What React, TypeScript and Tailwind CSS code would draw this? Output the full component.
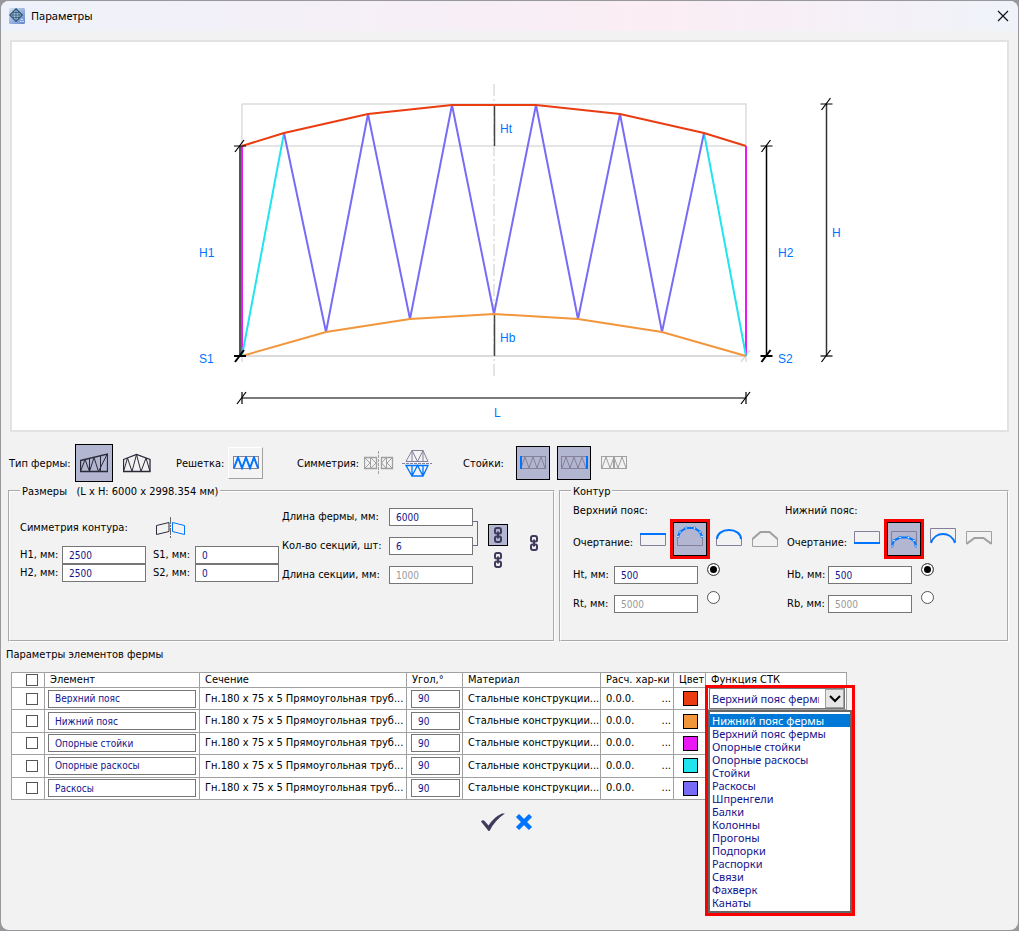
import { useId, useState, type ReactNode } from 'react';
import clsx from 'clsx';

const BLUE = '#0074ff';
const INK = '#2b2a3a';
const MUTED = '#85809a';
const GRAY = '#a0a0a0';

const elements = [
  { name: 'Верхний пояс', swatch: 'bg-[#ea3c10]' },
  { name: 'Нижний пояс', swatch: 'bg-[#f2963c]' },
  { name: 'Опорные стойки', swatch: 'bg-[#ea18f4]' },
  { name: 'Опорные раскосы', swatch: 'bg-[#20e4ee]' },
  { name: 'Раскосы', swatch: 'bg-[#786cf6]' },
];

const functions = [
  'Нижний пояс фермы',
  'Верхний пояс фермы',
  'Опорные стойки',
  'Опорные раскосы',
  'Стойки',
  'Раскосы',
  'Шпренгели',
  'Балки',
  'Колонны',
  'Прогоны',
  'Подпорки',
  'Распорки',
  'Связи',
  'Фахверк',
  'Канаты',
];

/* ---------- icons ---------- */

function Icon({ w, h, children }: { w: number; h: number; children: ReactNode }) {
  return (
    <svg width={w} height={h} viewBox={`0 0 ${w} ${h}`} fill="none" aria-hidden="true" className="block shrink-0">
      {children}
    </svg>
  );
}

function AppIcon() {
  return (
    <Icon w={16} h={16}>
      <defs>
        <linearGradient id="app-bg" x1="0" y1="0" x2="1" y2="1">
          <stop offset="0" stopColor="#d5e0f2" />
          <stop offset="1" stopColor="#5f86cc" />
        </linearGradient>
      </defs>
      <rect width="16" height="16" rx="1.5" fill="url(#app-bg)" />
      <path d="M7 .8 13.4 7 7 13.4.8 7Z" fill="#a9c0da" stroke="#2f5878" strokeWidth="1.2" />
      <path d="M7 1V13M1 7H13M4.5 3.5Q3 7 4.5 10.5M9.5 3.5Q11 7 9.5 10.5M3.5 4.500H10.500M3.5 9.500H10.500" stroke="#2f5878" strokeWidth=".8" />
      <path d="M11 13.5h1.5M13.5 13.5H15M12 11.5h2" stroke="#dfe9f7" />
    </Icon>
  );
}

function ChainIcon() {
  return (
    <Icon w={8} h={16}>
      <g stroke="#3f3b5c" strokeWidth="2">
        <path d="M3 6.500H2.500Q1 6.500 1 5V3Q1 1 3 1H5Q7 1 7 3V5Q7 6.500 5.500 6.500H5" />
        <path d="M3 9.500H2.500Q1 9.500 1 11V13Q1 15 3 15H5Q7 15 7 13V11Q7 9.500 5.500 9.500H5" />
        <path d="M4 4.500V11.500" />
      </g>
    </Icon>
  );
}

function SlopedTrussIcon() {
  return (
    <Icon w={28} h={20}>
      <g stroke={INK}>
        <path d="M.5 7.500 27.500 1V18.500H.5Z" strokeWidth="1.300" />
        <path d="M.5 18.500 5 6.500 9.500 18.500 14 4.500 18.500 18.500 27 1.500M9.500 5.500V18.500M20.500 3V18.500" />
      </g>
    </Icon>
  );
}

function GableTrussIcon() {
  return (
    <Icon w={28} h={20}>
      <g stroke={INK}>
        <path d="M.5 6.500 13.500 1.500 27 6.500V18.500H.5Z" strokeWidth="1.300" />
        <path d="M.5 18.500 4.500 5 9 18.500 13.500 1.500 18 18.500 23 5 27 18.500" />
      </g>
    </Icon>
  );
}

function LatticeIcon() {
  return (
    <Icon w={26} h={14}>
      <rect x=".5" y=".5" width="25" height="12" stroke={MUTED} />
      <path d="M1 12 5 1.500 9 12 13 1.500 17 12 21 1.500 25 12" stroke={BLUE} strokeWidth="2" />
    </Icon>
  );
}

function MirrorVerticalIcon() {
  return (
    <Icon w={30} h={24}>
      <g stroke={GRAY}>
        <path d="M.5 6.500H12.500V17.500H.5ZM17.500 6.500H28.500V17.500H17.500Z" strokeWidth="1.300" />
        <path d="M1 7 6 12 1 17M6.500 7V17M7 7 12 12 7 17M28 7 23 12 28 17M22.500 7V17M22 7 17.500 12 22 17" />
        <path d="M14.500 0V24" strokeDasharray="3 1" />
      </g>
    </Icon>
  );
}

function MirrorHorizontalIcon() {
  return (
    <Icon w={30} h={28}>
      <path d="M4 12.500 10 1.500H21L26 12.500ZM10 12.500V1.500L15.500 12.500 21 1.500V12.500" stroke={MUTED} />
      <path d="M0 14.500H30" stroke={MUTED} strokeDasharray="3 1" />
      <path d="M4 16.500H26L21 27H10ZM10 16.500V27L15.500 16.500 21 27V16.500" stroke={BLUE} strokeWidth="1.300" />
    </Icon>
  );
}

function PostIcon({ side }: { side: 'left' | 'right' | 'center' }) {
  const c = side === 'center' ? GRAY : MUTED;
  return (
    <Icon w={27} h={14}>
      <rect x=".5" y=".5" width="25" height="12" stroke={c} />
      <path d="M1 12 5 1 9 12 13 1 17 12 21 1 25 12" stroke={c} />
      {side === 'left' && <path d="M1 0V13" stroke={BLUE} strokeWidth="2" />}
      {side === 'right' && <path d="M26 0V13" stroke={BLUE} strokeWidth="2" />}
      {side === 'center' && <path d="M13 0V13" stroke={c} strokeWidth="2" />}
    </Icon>
  );
}

function ContourSymmetryIcon() {
  return (
    <Icon w={31} h={22}>
      <path d="M1.500 8.500 14 5.500V14.500L1.500 17.500Z" stroke={INK} />
      <path d="M15.500 0V21" stroke={INK} strokeOpacity=".7" strokeDasharray="7 1 2 1" />
      <path d="M17.500 5.500 29.500 8.500V17.500L17.500 14.500Z" stroke={BLUE} />
    </Icon>
  );
}

const topShapes: ReactNode[] = [
  <g key="flat">
    <path d="M.5 8V19.500H25.500V8" stroke={MUTED} />
    <path d="M0 8H26" stroke={BLUE} strokeWidth="2" />
  </g>,
  <g key="poly">
    <path d="M.5 11V19.500H25.500V11" stroke={MUTED} />
    <path d="M1 10.500 3 6 9 2H17.500L23 6 25 10.500" stroke={BLUE} strokeWidth="2" />
    {[[1, 10.5], [3, 6], [9, 2], [17.5, 2], [23, 6], [25, 10.5]].map(([x, y]) => (
      <circle key={x} cx={x} cy={y} r="1.200" fill="#fff" stroke={BLUE} strokeWidth=".8" />
    ))}
  </g>,
  <g key="arc">
    <path d="M.5 12V19.500H25.500V12" stroke={MUTED} />
    <path d="M1 13C1 8 6 4 13 4S25 8 25 13" stroke={BLUE} strokeWidth="2" />
  </g>,
  <g key="trapeze" stroke={GRAY}>
    <path d="M.5 13V20.500H25.500V13" />
    <path d="M.5 13 8.500 6H17.500L25.500 13" strokeWidth="2" />
  </g>,
];

const bottomShapes: ReactNode[] = [
  <g key="flat">
    <path d="M.5 17V5.500H25.500V17" stroke={MUTED} />
    <path d="M0 17H26" stroke={BLUE} strokeWidth="2" />
  </g>,
  <g key="poly">
    <path d="M.5 19V5.500H25.500V19" stroke={MUTED} />
    <path d="M1 20 3 14.500 9 11.500H17.500L23 14.500 25 20" stroke={BLUE} strokeWidth="2" />
    {[[1, 20], [3, 14.5], [9, 11.5], [17.5, 11.5], [23, 14.5], [25, 20]].map(([x, y]) => (
      <circle key={x} cx={x} cy={y} r="1.200" fill="#fff" stroke={BLUE} strokeWidth=".8" />
    ))}
  </g>,
  <g key="arc">
    <path d="M.5 16V2.500H25.500V16" stroke={MUTED} />
    <path d="M1 17C3 11 8 8 13 8S23 11 25 17" stroke={BLUE} strokeWidth="2" />
  </g>,
  <g key="trapeze" stroke={GRAY}>
    <path d="M.5 18V5.500H25.500V18" />
    <path d="M.5 18 8.500 12H17.500L25.500 18" strokeWidth="2" />
  </g>,
];

/* ---------- truss drawing ---------- */

function Tick({ x, y, bold = false, vertical = false }: { x: number; y: number; bold?: boolean; vertical?: boolean }) {
  return (
    <g stroke="#000" strokeWidth={bold ? 2 : 1.2}>
      {vertical ? <path d={`M${x} ${y - 6}v12`} /> : <path d={`M${x - 6} ${y}h12`} />}
      <path d={`M${x - 5} ${y + 6}l9 -12`} />
    </g>
  );
}

function TrussDrawing() {
  return (
    <svg viewBox="12 42 995 388" className="block w-full bg-white" fill="none" role="img" aria-label="Схема фермы">
      <g stroke="#dcdcdc" strokeWidth="1.500">
        <path d="M242 104H746V362M242 104V362" />
        <path d="M242 146H746" />
        <path d="M242 356H746" stroke="#cfcfcf" />
        <path d="M494 84V377" strokeDasharray="12 3 2 3" />
        <path d="M741 362 750 350" />
      </g>
      <path d="M494.500 104V146M494.500 314V356" stroke="#444" strokeWidth="1.500" />
      <path d="M240.500 146V356" stroke="#555" strokeWidth="3" />
      <g strokeWidth="2">
        <path d="M242 146V356M746 146V356" stroke="#ea18f4" />
        <path d="M242 356 284 133M704 133 746 356" stroke="#20e4ee" />
        <path
          d="M284 133 326 332 368 114 410 319 452 105 494 314 536 105 578 319 620 114 662 332 704 133"
          stroke="#786cf6"
        />
        <path d="M242 356 326 332 410 319 494 314 578 319 662 332 746 356" stroke="#f2963c" />
        <path d="M242 146 284 133 368 114 452 105H536L620 114 704 133 746 146" stroke="#ea3c10" />
      </g>
      <Tick x={240} y={146} />
      <Tick x={240} y={356} bold />

      <path d="M766.500 146V356" stroke="#000" strokeWidth="1.500" />
      <Tick x={766.5} y={146} />
      <Tick x={766.5} y={356} bold />

      <path d="M826.500 104V356" stroke="#333" strokeWidth="1.500" />
      <Tick x={826.5} y={104} />
      <Tick x={826.5} y={356} />

      <path d="M242 398H746" stroke="#7a7a7a" strokeWidth="2" />
      <Tick x={242} y={398} vertical />
      <Tick x={746} y={398} vertical />

      <g fill={BLUE} className="font-['Liberation_Sans'] text-xs">
        <text x="500" y="133">Ht</text>
        <text x="500" y="342">Hb</text>
        <text x="199" y="257">H1</text>
        <text x="199" y="363">S1</text>
        <text x="778" y="257">H2</text>
        <text x="778" y="363">S2</text>
        <text x="832" y="237">H</text>
        <text x="494" y="417">L</text>
      </g>
    </svg>
  );
}

/* ---------- controls ---------- */

const inputBase = "block h-[18px] border border-[#767676] bg-white px-[6px] font-['DejaVu_Sans_Condensed'] text-[10px] text-[#14148c] outline-none disabled:text-[#9a9a9a]";

function Field({ label, value, labelClass, disabled }: { label: string; value: string; labelClass: string; disabled?: boolean }) {
  const id = useId();
  return (
    <div className="flex items-center">
      <label htmlFor={id} className={clsx('shrink-0 whitespace-nowrap', labelClass)}>
        {label}
      </label>
      <input id={id} defaultValue={value} disabled={disabled} className={clsx(inputBase, 'w-[84px]')} />
    </div>
  );
}

function IconButton({ title, className, children }: { title: string; className?: string; children: ReactNode }) {
  return (
    <button type="button" aria-label={title} className={clsx('flex shrink-0 items-center justify-center', className)}>
      {children}
    </button>
  );
}

function Chord({ title, shapes, h, r, className }: { title: string; shapes: ReactNode[]; h: string; r: string; className?: string }) {
  const group = useId();
  return (
    <div>
      <h3 className="leading-4">{title}</h3>
      <div className={className}>
        <div className="flex h-10 items-center">
          <span className="w-[67px] shrink-0 pt-2">Очертание:</span>
          <IconButton title="Прямое" className="w-[26px]">
            <Icon w={26} h={26}>{shapes[0]}</Icon>
          </IconButton>
          <IconButton title="Ломаное" className="mr-[6px] ml-1 size-10 border-3 border-[#fc0000] bg-black p-px">
            <span className="flex size-full items-center justify-center bg-[#b2b6d0]">
              <Icon w={26} h={26}>{shapes[1]}</Icon>
            </span>
          </IconButton>
          <IconButton title="Дуга" className="w-[26px]">
            <Icon w={26} h={26}>{shapes[2]}</Icon>
          </IconButton>
          <IconButton title="Трапеция" className="ml-[10px] w-[26px]">
            <Icon w={26} h={26}>{shapes[3]}</Icon>
          </IconButton>
        </div>
        <div className="mt-1 flex gap-[9px]">
          <div className="flex flex-col gap-[11px] pt-[3px]">
            <Field label={`${h}, мм:`} value="500" labelClass="w-[41px]" />
            <Field label={`${r}, мм:`} value="5000" labelClass="w-[41px]" disabled />
          </div>
          <div className="flex flex-col gap-[15px]">
            {[h, r].map((v) => (
              <input
                key={v}
                type="radio"
                name={group}
                aria-label={v}
                defaultChecked={v === h}
                className="size-[13px] appearance-none rounded-full border border-[#555] bg-white checked:bg-black checked:shadow-[inset_0_0_0_2px_white]"
              />
            ))}
          </div>
        </div>
      </div>
    </div>
  );
}

function FunctionSelect() {
  const [active, setActive] = useState(0);
  return (
    <div className="absolute -top-[3px] -left-px z-10 w-[150px] border-3 border-[#fc0000] font-['Noto_Sans'] text-[11px] text-[#14148c]">
      <div className="relative ml-px w-[136px]">
        <select
          aria-label="Функция СТК"
          defaultValue="Верхний пояс фермы"
          className="block h-[21px] w-full appearance-none border border-[#767676] bg-white pr-[25px] pl-[2px]"
        >
          {functions.map((f) => (
            <option key={f}>{f}</option>
          ))}
        </select>
        <span className="pointer-events-none absolute top-px right-px flex h-[19px] w-[19px] items-center justify-center border border-[#a0a0a0] bg-[#e6e6e6]">
          <svg width="12" height="8" viewBox="0 0 12 8" fill="none" stroke="#000" strokeWidth="2">
            <path d="M1 1 6 6 11 1" />
          </svg>
        </span>
      </div>
      <ul role="listbox" aria-label="Список функций" className="mt-px border-2 border-[#666] bg-white py-[2px]">
        {functions.map((f, i) => (
          <li
            key={f}
            role="option"
            aria-selected={i === active}
            onMouseEnter={() => setActive(i)}
            className={clsx('h-[13px] pl-[2px] leading-[13px]', i === active && 'bg-[#0078d7] text-white')}
          >
            {f}
          </li>
        ))}
      </ul>
    </div>
  );
}

function TableCheckbox({ label }: { label: string }) {
  return (
    <div className="flex justify-center pl-2">
      <input
        type="checkbox"
        aria-label={label}
        className="block size-[12px] appearance-none border border-[#555] bg-white checked:bg-[#555]"
      />
    </div>
  );
}

function ElementsTable() {
  const cell = 'border border-[#a0a0a0] p-0 pl-[5px] text-left font-normal whitespace-nowrap overflow-hidden';
  return (
    <table aria-label="Параметры элементов фермы" className="h-[128px] w-[836px] table-fixed border-collapse bg-white leading-[14px]">
      <colgroup>
        <col className="w-[33px]" />
        <col className="w-[155px]" />
        <col className="w-[207px]" />
        <col className="w-[56px]" />
        <col className="w-[138px]" />
        <col className="w-[73px]" />
        <col className="w-[32px]" />
        <col />
      </colgroup>
      <thead>
        <tr className="h-[15px]">
          <th className="border border-[#a0a0a0] p-0">
            <TableCheckbox label="Выбрать все" />
          </th>
          {['Элемент', 'Сечение', 'Угол,°', 'Материал', 'Расч. хар-ки', 'Цвет', 'Функция СТК'].map((h) => (
            <th key={h} className={cell}>
              {h}
            </th>
          ))}
        </tr>
      </thead>
      <tbody>
        {elements.map((el, i) => (
          <tr key={el.name} className="h-[22px]">
            <td className="border border-[#a0a0a0] p-0">
              <TableCheckbox label={el.name} />
            </td>
            <td className="border border-[#a0a0a0] px-[3px] py-0">
              <input aria-label="Элемент" defaultValue={el.name} className={clsx(inputBase, 'w-full')} />
            </td>
            <td className={cell}>Гн.180 x 75 x 5 Прямоугольная труб...</td>
            <td className="border border-[#a0a0a0] py-0 pr-[2px] pl-1">
              <input aria-label="Угол" defaultValue="90" className={clsx(inputBase, 'w-full')} />
            </td>
            <td className={cell}>Стальные конструкции...</td>
            <td className={clsx(cell, 'pr-[2px]')}>
              <div className="flex justify-between">
                <span>0.0.0.</span>
                <button type="button" aria-label="Изменить характеристики">...</button>
              </div>
            </td>
            <td className="border border-[#a0a0a0] p-0">
              <button type="button" aria-label="Цвет" className={clsx('ml-[9px] block size-[15px] border border-black', el.swatch)} />
            </td>
            <td className={clsx('relative p-0', i === 0 && 'border border-[#a0a0a0]', i > 0 && 'bg-[#f2f2f2]')}>
              {i === 0 && <FunctionSelect />}
            </td>
          </tr>
        ))}
      </tbody>
    </table>
  );
}

const pressed = 'border border-black bg-[#b2b6d0]';
const groupBox = 'min-w-0 border-2 border-[#fdfdfd] [border-style:groove]';

export default function App() {
  return (
    <div className="flex min-h-screen bg-[#98989c] p-px">
      <main className="w-full min-w-0 overflow-hidden rounded-lg bg-[#f2f2f2] pb-4 font-['DejaVu_Sans_Condensed'] text-[11px] text-black">
        <header className="flex h-[30px] items-center gap-[6px] bg-linear-to-r from-[#eef2fa] via-[#fbedf4] via-65% to-[#eff3f9] pr-[9px] pl-2">
          <AppIcon />
          <h1 className="flex-1 font-['Noto_Sans']">Параметры</h1>
          <IconButton title="Закрыть" className="size-3">
            <Icon w={12} h={12}>
              <path d="M1 1 11 11M11 1 1 11" stroke="#111" strokeWidth="1.200" />
            </Icon>
          </IconButton>
        </header>

        <div className="mx-[9px] mt-[9px] border-2 border-[#e2e2e2]">
          <TrussDrawing />
        </div>

        <div className="mt-3 flex h-[38px] items-center pl-2">
          <span className="w-[66px] shrink-0 pt-[2px]">Тип фермы:</span>
          <IconButton title="Скатная ферма" className={clsx('size-[38px]', pressed)}>
            <SlopedTrussIcon />
          </IconButton>
          <IconButton title="Двускатная ферма" className="ml-[10px]">
            <GableTrussIcon />
          </IconButton>

          <span className="ml-[25px] w-[52px] shrink-0 pt-[2px]">Решетка:</span>
          <IconButton
            title="Решетка"
            className="h-[32px] w-[35px] border border-t-white border-r-[#a0a0a0] border-b-[#a0a0a0] border-l-white bg-[#f4f4f4]"
          >
            <LatticeIcon />
          </IconButton>

          <span className="ml-[34px] w-[67px] shrink-0 pt-[2px]">Симметрия:</span>
          <IconButton title="Относительно вертикали">
            <MirrorVerticalIcon />
          </IconButton>
          <IconButton title="Относительно горизонтали" className="ml-2">
            <MirrorHorizontalIcon />
          </IconButton>

          <span className="ml-[31px] w-[53px] shrink-0 pt-[2px]">Стойки:</span>
          <IconButton title="Левая стойка" className={clsx('size-[34px]', pressed)}>
            <PostIcon side="left" />
          </IconButton>
          <IconButton title="Правая стойка" className={clsx('ml-[7px] size-[34px]', pressed)}>
            <PostIcon side="right" />
          </IconButton>
          <IconButton title="Средняя стойка" className="ml-[10px]">
            <PostIcon side="center" />
          </IconButton>
        </div>

        <div className="mt-px mr-[9px] ml-[7px] grid grid-cols-[547fr_450fr] gap-1">
          <fieldset className={groupBox}>
            <legend className="ml-[10px] px-[2px] pt-[2px] leading-[14px] whitespace-pre">Размеры   (L x H: 6000 x 2998.354 мм)</legend>
            <div className="flex items-start pl-[10px]">
              <div className="mt-[15px]">
                <div className="flex h-[28px] items-center">
                  <span className="w-[135px]">Симметрия контура:</span>
                  <IconButton title="Симметрия контура">
                    <ContourSymmetryIcon />
                  </IconButton>
                </div>
                <div className="mt-1 grid grid-cols-2 gap-x-[7px]">
                  <Field label="H1, мм:" value="2500" labelClass="w-[42px]" />
                  <Field label="S1, мм:" value="0" labelClass="w-[42px]" />
                  <Field label="H2, мм:" value="2500" labelClass="w-[42px]" />
                  <Field label="S2, мм:" value="0" labelClass="w-[42px]" />
                </div>
              </div>
              <div className="mt-[9px] ml-[3px] flex flex-col gap-[11px]">
                <Field label="Длина фермы, мм:" value="6000" labelClass="w-[107px]" />
                <Field label="Кол-во секций, шт:" value="6" labelClass="w-[107px]" />
                <Field label="Длина секции, мм:" value="1000" labelClass="w-[107px]" disabled />
              </div>
              <div className="mt-[22px] h-[25px] w-[5px] shrink-0 border border-l-0 border-[#6b6789]" />
              <div className="mt-[25px] ml-[10px] flex flex-col items-center gap-[6px]">
                <IconButton title="Связать длину и секции" className={clsx('h-[22px] w-[20px]', pressed)}>
                  <ChainIcon />
                </IconButton>
                <IconButton title="Связать длину секции">
                  <ChainIcon />
                </IconButton>
              </div>
              <IconButton title="Связать все" className="mt-[36px] ml-[22px]">
                <ChainIcon />
              </IconButton>
            </div>
          </fieldset>

          <fieldset className={clsx(groupBox, 'pb-[27px]')}>
            <legend className="ml-[10px] px-[2px] pt-[2px] leading-[14px]">Контур</legend>
            <div className="flex gap-[7px] pt-1 pl-3">
              <Chord title="Верхний пояс:" shapes={topShapes} h="Ht" r="Rt" />
              <Chord title="Нижний пояс:" shapes={bottomShapes} h="Hb" r="Rb" className="pl-[2px]" />
            </div>
          </fieldset>
        </div>

        <h2 className="mt-[5px] ml-[5px] leading-4">Параметры элементов фермы</h2>
        <div className="mt-[9px] ml-[10px]">
          <ElementsTable />
        </div>

        <footer className="mt-3 flex items-center justify-center gap-[10px] pr-[6px]">
          <IconButton title="Применить">
            <Icon w={24} h={20}>
              <path d="M0 9.500Q2 7 4 9.500L7.500 13.500Q13 5 21 1.500L24 1.500Q14 8 8.500 19H7.500Z" fill="#3f3b5c" />
            </Icon>
          </IconButton>
          <IconButton title="Отмена">
            <Icon w={18} h={20}>
              <path d="M2.500 3.500 15.500 16.500M15.500 3.500 2.500 16.500" stroke={BLUE} strokeWidth="4.500" />
            </Icon>
          </IconButton>
        </footer>
      </main>
    </div>
  );
}
